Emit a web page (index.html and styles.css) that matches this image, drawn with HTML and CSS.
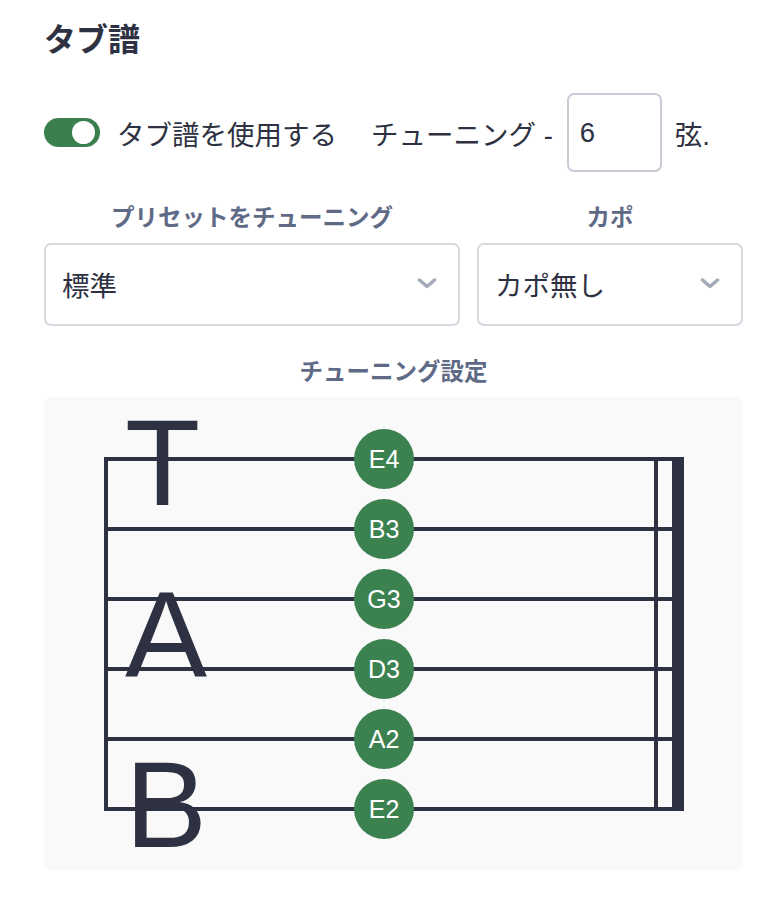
FILE: index.html
```html
<!DOCTYPE html>
<html lang="ja">
<head>
    <meta charset="UTF-8">
    <meta name="viewport" content="width=device-width, initial-scale=1.0">
    <title>タブ譜</title>
    <link rel="stylesheet" href="styles.css">
</head>
<body>
    <div class="page">
        <h1 class="title">タブ譜</h1>

        <div class="tab-row">
            <label class="switch">
                <input type="checkbox" checked>
                <span class="slider"></span>
            </label>
            <span class="switch-text">タブ譜を使用する</span>
            <span class="strings-text">チューニング -</span>
            <input type="text" class="strings-input" value="6">
            <span class="strings-unit">弦.</span>
        </div>

        <div class="presets">
            <div class="field">
                <div class="field-label">プリセットをチューニング</div>
                <div class="select-box">
                    <span>標準</span>
                    <svg class="chevron" width="20" height="11" viewBox="0 0 20 11"><path d="M2.5 2 L10 8.5 L17.5 2"/></svg>
                </div>
            </div>
            <div class="field">
                <div class="field-label">カポ</div>
                <div class="select-box">
                    <span>カポ無し</span>
                    <svg class="chevron" width="20" height="11" viewBox="0 0 20 11"><path d="M2.5 2 L10 8.5 L17.5 2"/></svg>
                </div>
            </div>
        </div>

        <div class="field-label tuning-label">チューニング設定</div>

        <div class="staff-box">
            <svg class="staff" width="699" height="473" viewBox="0 0 699 473">
                <!-- clef letters -->
                <text class="clef" x="81" y="108">T</text>
                <text class="clef" x="81" y="280">A</text>
                <text class="clef" x="81" y="450">B</text>

                <!-- strings -->
                <g class="lines">
                    <line x1="60" y1="62" x2="630" y2="62"/>
                    <line x1="60" y1="132" x2="630" y2="132"/>
                    <line x1="60" y1="202" x2="630" y2="202"/>
                    <line x1="60" y1="272" x2="630" y2="272"/>
                    <line x1="60" y1="342" x2="630" y2="342"/>
                    <line x1="60" y1="412" x2="630" y2="412"/>
                    <line x1="62" y1="60" x2="62" y2="414"/>
                    <line x1="612" y1="60" x2="612" y2="414"/>
                </g>
                <rect class="end-bar" x="628" y="60" width="12" height="354"/>

                <!-- tuning notes -->
                <g class="note"><circle cx="340" cy="62" r="30"/><text x="340" y="71">E4</text></g>
                <g class="note"><circle cx="340" cy="132" r="30"/><text x="340" y="141">B3</text></g>
                <g class="note"><circle cx="340" cy="202" r="30"/><text x="340" y="211">G3</text></g>
                <g class="note"><circle cx="340" cy="272" r="30"/><text x="340" y="281">D3</text></g>
                <g class="note"><circle cx="340" cy="342" r="30"/><text x="340" y="351">A2</text></g>
                <g class="note"><circle cx="340" cy="412" r="30"/><text x="340" y="421">E2</text></g>
            </svg>
        </div>
    </div>
</body>
</html>
```

FILE: styles.css
```css
body {
    margin: 0;
    padding: 0;
    background-color: #ffffff;
    color: #2d3142;
    font-family: "Liberation Sans", "Noto Sans CJK JP", sans-serif;
}
.page {
    width: 699px;
    margin-left: 44px;
}
.title {
    margin: 20px 0 0;
    font-size: 32px;
    line-height: 40px;
    font-weight: bold;
}
.tab-row {
    display: flex;
    align-items: center;
    height: 79px;
    margin-top: 33px;
    font-size: 27.5px;
}
.switch {
    position: relative;
    display: inline-block;
    width: 56px;
    height: 29px;
    margin-right: 17px;
}
.switch input {
    display: none;
}
.slider {
    position: absolute;
    inset: 0;
    background-color: #3b7f4f;
    border-radius: 15px;
}
.slider::before {
    content: "";
    position: absolute;
    top: 3px;
    left: 28px;
    width: 23px;
    height: 23px;
    border-radius: 50%;
    background-color: white;
}
.strings-text {
    margin-left: 34px;
}
.strings-input {
    box-sizing: border-box;
    width: 95px;
    height: 79px;
    margin: 0 13px 0 14px;
    padding: 0 0 0 11px;
    border: 2px solid #c8ccd6;
    border-radius: 7px;
    font-family: inherit;
    font-size: 27.5px;
    color: #2d3142;
    outline: none;
}
.presets {
    display: grid;
    grid-template-columns: 416fr 266fr;
    gap: 17px;
    margin-top: 31px;
}
.field-label {
    text-align: center;
    font-size: 23.5px;
    line-height: 30px;
    font-weight: bold;
    color: #5f6b86;
}
.select-box {
    box-sizing: border-box;
    display: flex;
    align-items: center;
    justify-content: space-between;
    height: 83px;
    margin-top: 10px;
    padding: 0 21px 2px 16px;
    border: 2px solid #d5d9e0;
    border-radius: 7px;
    font-size: 27.5px;
}
.chevron path {
    fill: none;
    stroke: #a3aab8;
    stroke-width: 3.5;
    stroke-linecap: round;
    stroke-linejoin: round;
}
.tuning-label {
    margin-top: 31px;
}
.staff-box {
    height: 473px;
    margin-top: 10px;
    background-color: #f9f9f9;
    border-radius: 8px;
}
.staff {
    display: block;
}
.clef {
    font-family: "Liberation Sans", sans-serif;
    font-size: 123px;
    fill: #2d3142;
}
.lines line {
    stroke: #2d3142;
    stroke-width: 4;
}
.end-bar {
    fill: #2d3142;
}
.note circle {
    fill: #3c8251;
}
.note text {
    font-family: "Liberation Sans", sans-serif;
    font-size: 25px;
    fill: white;
    text-anchor: middle;
}
```
